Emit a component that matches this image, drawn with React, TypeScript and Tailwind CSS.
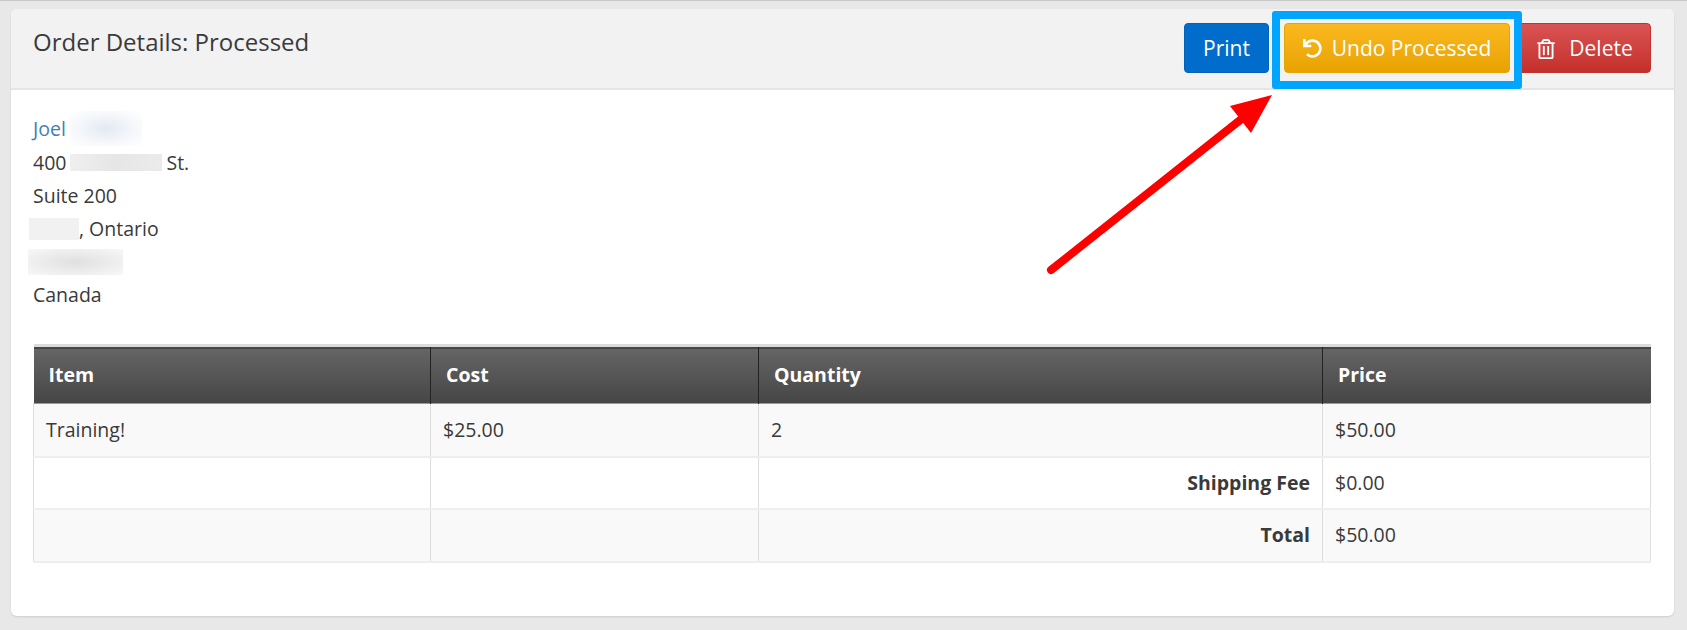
import { FaUndo, FaRegTrashAlt } from 'react-icons/fa'

const rowCell = 'border-x border-[#dddddd] border-b-2 border-b-[#eeeeee] px-3 text-[19.5px] text-[#3a3a3a]'
const headCell = 'border-r border-[#222222] px-[15px] text-left text-[19.5px] font-bold text-white'

function Redacted({ className }: { className: string }) {
  return <span className={`inline-block overflow-hidden align-middle ${className}`} />
}

export default function App() {
  return (
    <div className="relative min-h-[630px] border-t border-[#c8c8c8] bg-[#e8e8e8] pt-2 pr-[13px] pl-[11px] font-['Open_Sans',sans-serif] text-[19.5px] text-[#3a3a3a]">
      <div className="overflow-hidden rounded-md bg-white shadow-[0_1px_2px_rgba(0,0,0,0.12)]">
        <div className="flex h-[81px] items-start justify-between border-b-2 border-[#e5e5e5] bg-[#f2f2f2] pr-[23px] pl-[22px]">
          <h3 className="mt-[15px] text-[24px] leading-[36px] text-[#3a3a3a]">Order Details: Processed</h3>
          <div className="mt-[14px] flex">
            <button className="h-[50px] w-[85px] rounded border border-[#0062b8] bg-[#006dcc] pt-px text-[21px] text-white">Print</button>
            <button className="ml-[15px] flex h-[50px] w-[226px] items-center justify-center gap-[10px] rounded border border-[#e8a400] bg-gradient-to-b from-[#fbb91e] to-[#e8a200] pt-px text-[21px] text-white">
              <FaUndo size={19} />
              Undo Processed
            </button>
            <button className="ml-2 flex h-[50px] w-[133px] items-center justify-center gap-[13px] rounded border border-[#c0332e] bg-gradient-to-b from-[#da5353] to-[#c42f2b] pt-px text-[21px] text-white">
              <FaRegTrashAlt size={20} />
              Delete
            </button>
          </div>
        </div>

        <div className="pt-[21px] pr-[24px] pb-[53px] pl-[22px]">
          <address className="mb-[33px] leading-[33px] not-italic">
            <div className="flex items-center">
              <a className="text-[#3f7fb8]">Joel</a>
              <Redacted className="ml-[4px] h-[35px] w-[72px] bg-[radial-gradient(ellipse_at_center,#e3e9f3_0%,#f6f8fb_60%,#ffffff_100%)]" />
            </div>
            <div className="flex items-center">
              400
              <Redacted className="mx-[4px] h-[17px] w-[92px] bg-gradient-to-r from-[#efefef] via-[#e6e6e6] to-[#ebebeb]" />
              St.
            </div>
            <div>Suite 200</div>
            <div className="-ml-[4px] flex items-center">
              <Redacted className="h-[22px] w-[50px] bg-[#f1f1f1]" />
              , Ontario
            </div>
            <div className="-ml-[5px] flex h-[33px] items-center">
              <Redacted className="h-[26px] w-[95px] bg-[radial-gradient(ellipse_at_center,#e0e0e0_0%,#eeeeee_60%,#f8f8f8_100%)]" />
            </div>
            <div>Canada</div>
          </address>

          <table className="w-full table-fixed border-collapse">
            <colgroup>
              <col className="w-[397px]" />
              <col className="w-[328px]" />
              <col className="w-[564px]" />
              <col className="w-[328px]" />
            </colgroup>
            <thead>
              <tr className="h-[58px] border-t-[3px] border-b border-t-[#dcdcdc] border-b-[#999999] bg-gradient-to-b from-[#656565] to-[#464646]">
                <th className={headCell}>Item</th>
                <th className={headCell}>Cost</th>
                <th className={headCell}>Quantity</th>
                <th className="px-[15px] text-left text-[19.5px] font-bold text-white">Price</th>
              </tr>
            </thead>
            <tbody>
              <tr className="h-[53px] bg-[#f9f9f9]">
                <td className={rowCell}>Training!</td>
                <td className={rowCell}>$25.00</td>
                <td className={rowCell}>2</td>
                <td className={rowCell}>$50.00</td>
              </tr>
              <tr className="h-[52px] bg-white">
                <td className={rowCell}></td>
                <td className={rowCell}></td>
                <td className={`${rowCell} text-right font-bold`}>Shipping Fee</td>
                <td className={rowCell}>$0.00</td>
              </tr>
              <tr className="h-[53px] bg-[#f9f9f9]">
                <td className={rowCell}></td>
                <td className={rowCell}></td>
                <td className={`${rowCell} text-right font-bold`}>Total</td>
                <td className={rowCell}>$50.00</td>
              </tr>
            </tbody>
          </table>
        </div>
      </div>

      {/* annotation drawn over the screenshot */}
      <div className="absolute top-[10px] left-[1272px] h-[78px] w-[250px] rounded-[3px] border-8 border-[#00a5ff]" />
      <svg className="absolute top-0 left-0" width="1687" height="630" fill="none">
        <line x1="1051" y1="269" x2="1244" y2="116" stroke="#ff0000" strokeWidth="8" strokeLinecap="round" />
        <polygon points="1272,94 1230,105 1251,132" fill="#ff0000" />
      </svg>
    </div>
  )
}
